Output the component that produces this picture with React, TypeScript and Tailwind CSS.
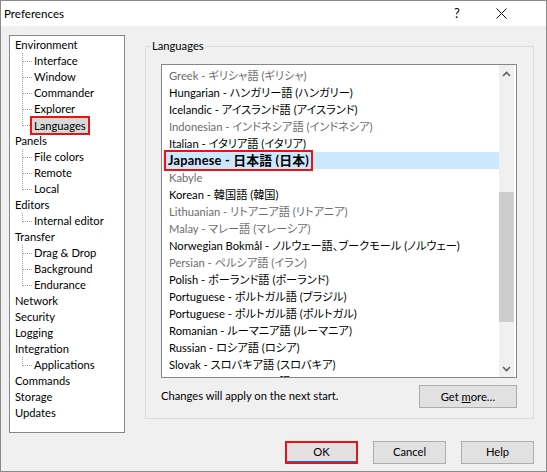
import React from "react";

type TreeGroup = { label: string; children?: string[] };

const tree: TreeGroup[] = [
  { label: "Environment", children: ["Interface", "Window", "Commander", "Explorer", "Languages"] },
  { label: "Panels", children: ["File colors", "Remote", "Local"] },
  { label: "Editors", children: ["Internal editor"] },
  { label: "Transfer", children: ["Drag & Drop", "Background", "Endurance"] },
  { label: "Network" },
  { label: "Security" },
  { label: "Logging" },
  { label: "Integration", children: ["Applications"] },
  { label: "Commands" },
  { label: "Storage" },
  { label: "Updates" },
];

type Lang = { text: string; missing?: boolean; selected?: boolean };

const languages: Lang[] = [
  { text: "Greek - ギリシャ語 (ギリシャ)", missing: true },
  { text: "Hungarian - ハンガリー語 (ハンガリー)" },
  { text: "Icelandic - アイスランド語 (アイスランド)" },
  { text: "Indonesian - インドネシア語 (インドネシア)", missing: true },
  { text: "Italian - イタリア語 (イタリア)" },
  { text: "Japanese - 日本語 (日本)", selected: true },
  { text: "Kabyle", missing: true },
  { text: "Korean - 韓国語 (韓国)" },
  { text: "Lithuanian - リトアニア語 (リトアニア)", missing: true },
  { text: "Malay - マレー語 (マレーシア)", missing: true },
  { text: "Norwegian Bokmål - ノルウェー語、ブークモール (ノルウェー)" },
  { text: "Persian - ペルシア語 (イラン)", missing: true },
  { text: "Polish - ポーランド語 (ポーランド)" },
  { text: "Portuguese - ポルトガル語 (ブラジル)" },
  { text: "Portuguese - ポルトガル語 (ポルトガル)" },
  { text: "Romanian - ルーマニア語 (ルーマニア)" },
  { text: "Russian - ロシア語 (ロシア)" },
  { text: "Slovak - スロバキア語 (スロバキア)" },
  { text: "Slovenian - スロベニア語 (スロベニア)" },
];

// dotted tree connector, last child only gets the upper half of the vertical line
function Connector({ last }: { last: boolean }) {
  return (
    <svg width="12" height="16" className="shrink-0">
      <line x1="0.5" y1="0" x2="0.5" y2={last ? 9 : 16} stroke="#a0a0a0" strokeDasharray="1 1" />
      <line x1="1" y1="8.5" x2="11" y2="8.5" stroke="#a0a0a0" strokeDasharray="1 1" />
    </svg>
  );
}

function Chevron({ down }: { down?: boolean }) {
  return (
    <svg width="9" height="6" viewBox="0 0 9 6">
      <polyline
        points={down ? "1,1 4.5,4.5 8,1" : "1,5 4.5,1.5 8,5"}
        fill="none"
        stroke="#606060"
        strokeWidth="1.6"
      />
    </svg>
  );
}

export default function App() {
  return (
    <div className="w-[547px] h-[472px] border border-[#8a8a8a] bg-[#f0f0f0] flex flex-col font-['Lato','Noto_Sans_CJK_JP',sans-serif] text-[11.2px] text-black">
      {/* title bar */}
      <div className="h-[25px] bg-white flex items-center pl-[3px] pr-[23px] shrink-0">
        <span className="flex-1 leading-[16px] text-[11.6px]">Preferences</span>
        <span className="w-[44px] text-center text-[13px]">?</span>
        <span className="w-[44px] flex justify-center">
          <svg width="11" height="11" viewBox="0 0 11 11">
            <path d="M0.5 0.5 L10.5 10.5 M10.5 0.5 L0.5 10.5" stroke="#111" strokeWidth="1" />
          </svg>
        </span>
      </div>

      <div className="flex-1 flex flex-col pt-[9px] pl-[8px] pr-[12px]">
        <div className="flex items-start gap-[20px]">
          {/* tree */}
          <div className="w-[116px] h-[398px] bg-white border border-[#828790] pt-[1px] overflow-hidden">
            {tree.map((g) => (
              <div key={g.label}>
                <div className="h-[16px] leading-[16px] pl-[5px]">{g.label}</div>
                {g.children?.map((c, i) => {
                  const last = i === g.children!.length - 1;
                  const selected = c === "Languages";
                  return (
                    <div key={c} className="h-[16px] flex items-center pl-[12px]">
                      <Connector last={last} />
                      {selected ? (
                        <span className="ml-[-2px] px-[2px] h-[15px] leading-[15px] bg-[#d9d9d9] outline-2 outline-[#ee1111]">
                          {c}
                        </span>
                      ) : (
                        <span className="leading-[16px]">{c}</span>
                      )}
                    </div>
                  );
                })}
              </div>
            ))}
          </div>

          {/* Languages group */}
          <div className="mt-[11px] w-[389px] h-[373px] border border-[#dcdcdc] flex flex-col">
            <span className="self-start -mt-[9px] ml-[5px] px-[1px] bg-[#f0f0f0] leading-[16px]">Languages</span>

            <div className="ml-[15px] mt-[10px] w-[356px] h-[314px] bg-white border border-[#828790] flex">
              <div className="flex-1 pt-[2px] overflow-hidden [font-feature-settings:'palt']">
                {languages.map((l, i) =>
                  l.selected ? (
                    <div key={i} className="ml-[1px] h-[17px] bg-[#cce8ff] flex items-center">
                      <span className="ml-[3px] px-[2px] h-[17px] leading-[17px] font-bold outline-2 outline-[#ee1111] whitespace-nowrap text-[12.8px] tracking-[0.2px]">
                        {l.text}
                      </span>
                    </div>
                  ) : (
                    <div
                      key={i}
                      className={`ml-[1px] h-[17px] leading-[17px] pl-[6px] whitespace-nowrap ${l.missing ? "text-[#6d6d6d]" : "text-black"}`}
                    >
                      {l.text}
                    </div>
                  )
                )}
              </div>
              <div className="w-[15px] mr-[2px] bg-[#f0f0f0] flex flex-col">
                <div className="h-[17px] flex items-center justify-center">
                  <Chevron />
                </div>
                <div className="flex-1">
                  <div className="mt-[110px] h-[130px] bg-[#cdcdcd]" />
                </div>
                <div className="h-[17px] flex items-center justify-center">
                  <Chevron down />
                </div>
              </div>
            </div>

            <div className="ml-[15px] mt-[7px] w-[356px] flex items-center justify-between">
              <span>Changes will apply on the next start.</span>
              <button className="w-[98px] h-[23px] bg-[#e1e1e1] border border-[#adadad] leading-[16px]">
                Get <span className="underline">m</span>ore…
              </button>
            </div>
          </div>
        </div>

        {/* dialog buttons */}
        <div className="mt-[8px] flex justify-end gap-[15px]">
          <button className="w-[73px] h-[23px] bg-[#e1e1e1] border-2 border-[#ee1111] flex flex-col">
            <span className="flex-1 flex items-center justify-center border-b border-[#0078d7]">OK</span>
          </button>
          <button className="w-[73px] h-[23px] bg-[#e1e1e1] border border-[#adadad]">Cancel</button>
          <button className="w-[73px] h-[23px] bg-[#e1e1e1] border border-[#adadad]">Help</button>
        </div>
      </div>
    </div>
  );
}
